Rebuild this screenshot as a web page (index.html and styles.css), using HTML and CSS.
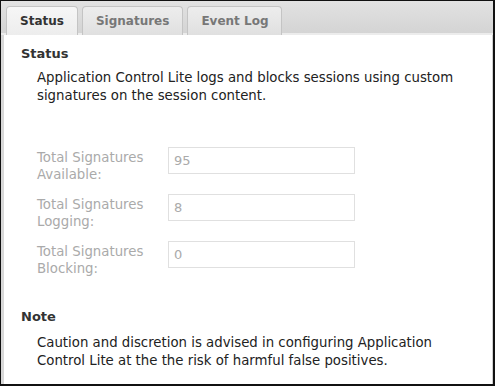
FILE: index.html
```html
<!DOCTYPE html>
<html lang="en">
<head>
    <meta charset="UTF-8">
    <title>Application Control Lite</title>
    <link rel="stylesheet" href="styles.css">
</head>
<body>
    <div class="frame">
        <div class="tab-strip">
            <div class="tab active">Status</div>
            <div class="tab">Signatures</div>
            <div class="tab">Event Log</div>
        </div>

        <div class="content">
            <h2>Status</h2>
            <p class="desc">Application Control Lite logs and blocks sessions using custom signatures on the session content.</p>

            <div class="form">
                <div class="form-row">
                    <label>Total Signatures Available:</label>
                    <input type="text" value="95" disabled>
                </div>
                <div class="form-row">
                    <label>Total Signatures Logging:</label>
                    <input type="text" value="8" disabled>
                </div>
                <div class="form-row">
                    <label>Total Signatures Blocking:</label>
                    <input type="text" value="0" disabled>
                </div>
            </div>

            <h2 class="note-title">Note</h2>
            <p class="desc note-desc">Caution and discretion is advised in configuring Application Control Lite at the the risk of harmful false positives.</p>
        </div>
    </div>
</body>
</html>
```

FILE: styles.css
```css
/* Base styles */
body {
    margin: 0;
    padding: 0;
    background: #fff;
    font-family: 'DejaVu Sans', Verdana, sans-serif;
    font-size: 13.3px;
    color: #222;
}

.frame {
    width: 495px;
    height: 386px;
    box-sizing: border-box;
    border: 1px solid #111;
    border-right-width: 2px;
    border-bottom-width: 2px;
    display: flex;
    flex-direction: column;
}

.tab-strip {
    display: flex;
    gap: 4px;
    padding: 5px 0 0 5px;
    height: 34px;
    box-sizing: border-box;
    background: linear-gradient(#e2e2e2, #d4d4d4);
    border-bottom: 2px solid #ececec;
}

.tab {
    padding: 0 13px;
    height: 29px;
    line-height: 29px;
    font-size: 12px;
    font-weight: bold;
    color: #777;
    background: linear-gradient(#ededed, #e0e0e0);
    border: 1px solid #c4c4c4;
    border-bottom: none;
    border-radius: 4px 4px 0 0;
    box-sizing: border-box;
}

.tab.active {
    color: #333;
    background: linear-gradient(#f6f6f6, #ededed);
}

.content {
    flex: 1;
    border-left: 3px solid #d8d8d8;
    border-right: 1px solid #cfcfcf;
    padding: 11px 10px 0 17px;
}

h2 {
    margin: 0;
    font-size: 13px;
    line-height: 15px;
    font-weight: bold;
    color: #333;
}

.desc {
    max-width: 430px;
    margin: 8px 0 0 16px;
    line-height: 18px;
    color: #222;
}

.form {
    margin: 43px 0 0 16px;
    display: flex;
    flex-direction: column;
    gap: 12px;
}

.form-row {
    display: flex;
    align-items: flex-start;
}

.form-row label {
    width: 131px;
    color: #aaa;
    line-height: 17px;
    margin-top: 1px;
}

.form-row input {
    width: 187px;
    height: 27px;
    margin-top: -1px;
    box-sizing: border-box;
    border: 1px solid #e0e0e0;
    background: #fff;
    color: #aaa;
    font-family: inherit;
    font-size: 13px;
    padding: 0 5px;
}

.note-title {
    margin-top: 32px;
}

.note-desc {
    margin-top: 10px;
}
```
